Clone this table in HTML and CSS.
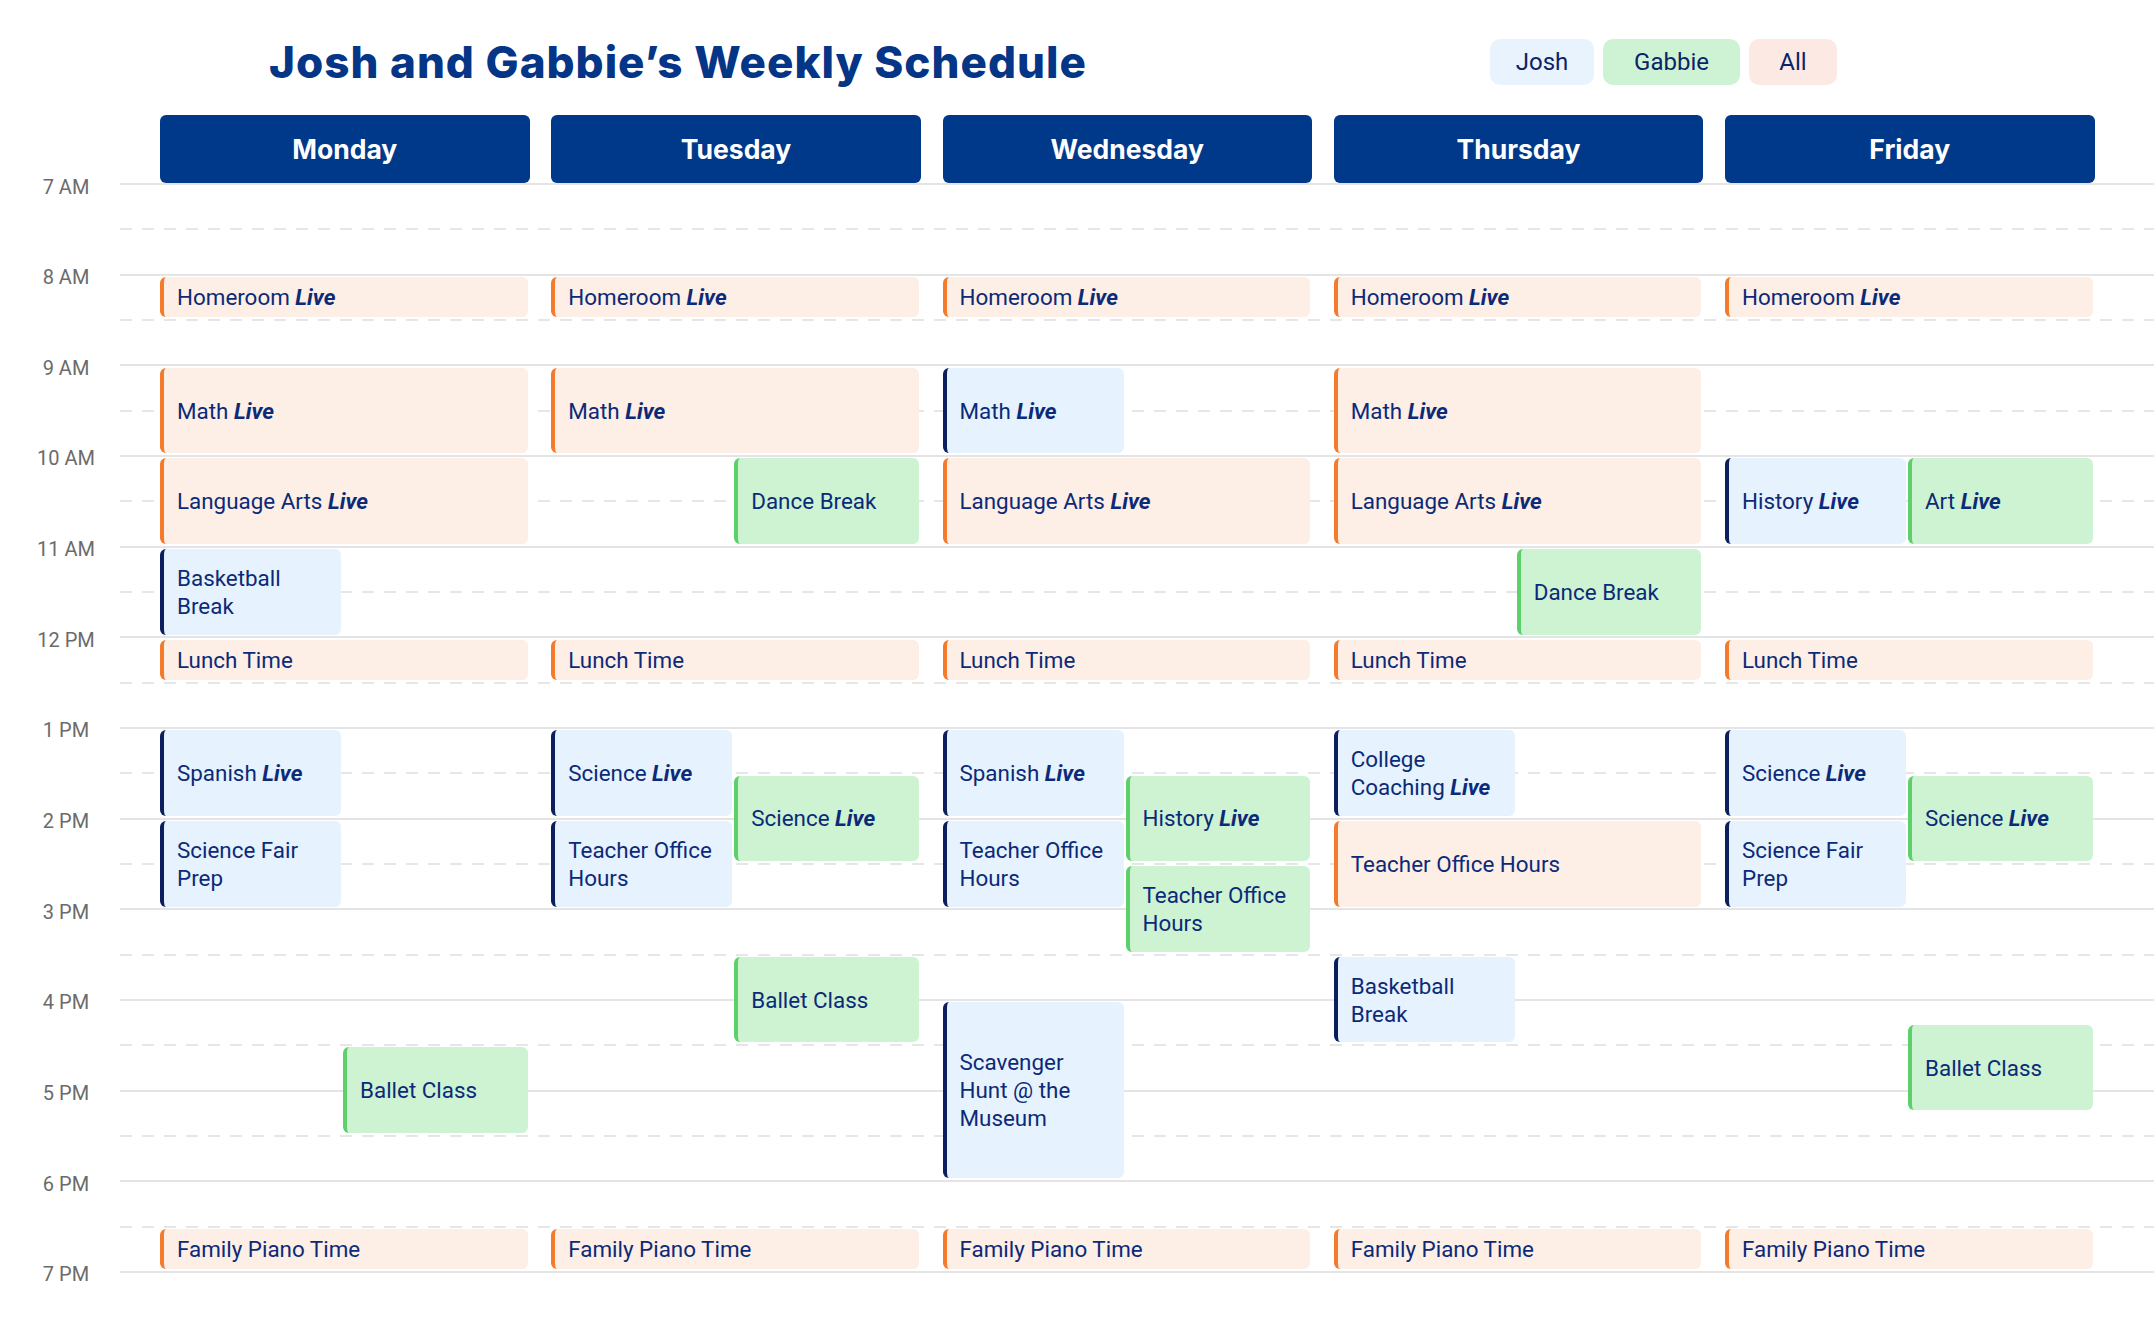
FILE: index.html
```html
<!DOCTYPE html>
<html lang="en">
<head>
<meta charset="utf-8">
<title>Josh and Gabbie’s Weekly Schedule</title>
<link rel="stylesheet" href="styles.css">
</head>
<body>
<div class="page">
  <header class="topbar">
    <h1 class="title">Josh and Gabbie’s Weekly Schedule</h1>
    <nav class="filters">
      <button class="pill pill-josh">Josh</button>
      <button class="pill pill-gabbie">Gabbie</button>
      <button class="pill pill-all">All</button>
    </nav>
  </header>

  <section class="schedule">
    <div class="day-heads">
      <div class="day-head">Monday</div>
      <div class="day-head">Tuesday</div>
      <div class="day-head">Wednesday</div>
      <div class="day-head">Thursday</div>
      <div class="day-head">Friday</div>
    </div>

    <div class="body">
      <div class="times">
        <span class="time">7 AM</span>
        <span class="time">8 AM</span>
        <span class="time">9 AM</span>
        <span class="time">10 AM</span>
        <span class="time">11 AM</span>
        <span class="time">12 PM</span>
        <span class="time">1 PM</span>
        <span class="time">2 PM</span>
        <span class="time">3 PM</span>
        <span class="time">4 PM</span>
        <span class="time">5 PM</span>
        <span class="time">6 PM</span>
        <span class="time">7 PM</span>
      </div>

      <div class="board">
        <div class="lines">
          <div class="ln"></div><div class="ln dash"></div>
          <div class="ln"></div><div class="ln dash"></div>
          <div class="ln"></div><div class="ln dash"></div>
          <div class="ln"></div><div class="ln dash"></div>
          <div class="ln"></div><div class="ln dash"></div>
          <div class="ln"></div><div class="ln dash"></div>
          <div class="ln"></div><div class="ln dash"></div>
          <div class="ln"></div><div class="ln dash"></div>
          <div class="ln"></div><div class="ln dash"></div>
          <div class="ln"></div><div class="ln dash"></div>
          <div class="ln"></div><div class="ln dash"></div>
          <div class="ln"></div><div class="ln dash"></div>
          <div class="ln-end"></div>
        </div>

        <div class="days">
          <!-- Monday -->
          <div class="day">
            <div class="ev all full" style="grid-row:5/7"><span>Homeroom <b>Live</b></span></div>
            <div class="ev all full" style="grid-row:9/13"><span>Math <b>Live</b></span></div>
            <div class="ev all full" style="grid-row:13/17"><span>Language Arts <b>Live</b></span></div>
            <div class="ev josh left" style="grid-row:17/21"><span>Basketball Break</span></div>
            <div class="ev all full" style="grid-row:21/23"><span>Lunch Time</span></div>
            <div class="ev josh left" style="grid-row:25/29"><span>Spanish <b>Live</b></span></div>
            <div class="ev josh left" style="grid-row:29/33"><span>Science Fair Prep</span></div>
            <div class="ev gabbie right" style="grid-row:39/43"><span>Ballet Class</span></div>
            <div class="ev all full" style="grid-row:47/49"><span>Family Piano Time</span></div>
          </div>
          <!-- Tuesday -->
          <div class="day">
            <div class="ev all full" style="grid-row:5/7"><span>Homeroom <b>Live</b></span></div>
            <div class="ev all full" style="grid-row:9/13"><span>Math <b>Live</b></span></div>
            <div class="ev gabbie right" style="grid-row:13/17"><span>Dance Break</span></div>
            <div class="ev all full" style="grid-row:21/23"><span>Lunch Time</span></div>
            <div class="ev josh left" style="grid-row:25/29"><span>Science <b>Live</b></span></div>
            <div class="ev gabbie right" style="grid-row:27/31"><span>Science <b>Live</b></span></div>
            <div class="ev josh left" style="grid-row:29/33"><span>Teacher Office Hours</span></div>
            <div class="ev gabbie right" style="grid-row:35/39"><span>Ballet Class</span></div>
            <div class="ev all full" style="grid-row:47/49"><span>Family Piano Time</span></div>
          </div>
          <!-- Wednesday -->
          <div class="day">
            <div class="ev all full" style="grid-row:5/7"><span>Homeroom <b>Live</b></span></div>
            <div class="ev josh left" style="grid-row:9/13"><span>Math <b>Live</b></span></div>
            <div class="ev all full" style="grid-row:13/17"><span>Language Arts <b>Live</b></span></div>
            <div class="ev all full" style="grid-row:21/23"><span>Lunch Time</span></div>
            <div class="ev josh left" style="grid-row:25/29"><span>Spanish <b>Live</b></span></div>
            <div class="ev gabbie right" style="grid-row:27/31"><span>History <b>Live</b></span></div>
            <div class="ev josh left" style="grid-row:29/33"><span>Teacher Office Hours</span></div>
            <div class="ev gabbie right" style="grid-row:31/35"><span>Teacher Office Hours</span></div>
            <div class="ev josh left" style="grid-row:37/45"><span>Scavenger Hunt @ the Museum</span></div>
            <div class="ev all full" style="grid-row:47/49"><span>Family Piano Time</span></div>
          </div>
          <!-- Thursday -->
          <div class="day">
            <div class="ev all full" style="grid-row:5/7"><span>Homeroom <b>Live</b></span></div>
            <div class="ev all full" style="grid-row:9/13"><span>Math <b>Live</b></span></div>
            <div class="ev all full" style="grid-row:13/17"><span>Language Arts <b>Live</b></span></div>
            <div class="ev gabbie right" style="grid-row:17/21"><span>Dance Break</span></div>
            <div class="ev all full" style="grid-row:21/23"><span>Lunch Time</span></div>
            <div class="ev josh left" style="grid-row:25/29"><span>College Coaching <b>Live</b></span></div>
            <div class="ev all full" style="grid-row:29/33"><span>Teacher Office Hours</span></div>
            <div class="ev josh left" style="grid-row:35/39"><span>Basketball Break</span></div>
            <div class="ev all full" style="grid-row:47/49"><span>Family Piano Time</span></div>
          </div>
          <!-- Friday -->
          <div class="day">
            <div class="ev all full" style="grid-row:5/7"><span>Homeroom <b>Live</b></span></div>
            <div class="ev josh left" style="grid-row:13/17"><span>History <b>Live</b></span></div>
            <div class="ev gabbie right" style="grid-row:13/17"><span>Art <b>Live</b></span></div>
            <div class="ev all full" style="grid-row:21/23"><span>Lunch Time</span></div>
            <div class="ev josh left" style="grid-row:25/29"><span>Science <b>Live</b></span></div>
            <div class="ev gabbie right" style="grid-row:27/31"><span>Science <b>Live</b></span></div>
            <div class="ev josh left" style="grid-row:29/33"><span>Science Fair Prep</span></div>
            <div class="ev gabbie right" style="grid-row:38/42"><span>Ballet Class</span></div>
            <div class="ev all full" style="grid-row:47/49"><span>Family Piano Time</span></div>
          </div>
        </div>
      </div>
    </div>
  </section>
</div>
</body>
</html>
```

FILE: styles.css
```css
* { box-sizing: border-box; }

html, body {
  margin: 0;
  background: #ffffff;
}

.page {
  width: 2154px;
  font-family: "Roboto", "Liberation Sans", sans-serif;
  color: #0b2a78;
}

/* ---------- top bar ---------- */
.topbar {
  height: 115px;
  padding: 39px 0 0 269px;
  display: grid;
  grid-template-columns: 1221px auto;
  align-content: start;
  align-items: center;
}

.title {
  margin: 0;
  font-family: "Inter", "Open Sans", sans-serif;
  font-weight: 800;
  font-size: 44px;
  letter-spacing: 1px;
  line-height: 46px;
  color: #053586;
  white-space: nowrap;
}

.filters {
  display: flex;
  gap: 9px;
}

.pill {
  height: 46px;
  padding: 0;
  border: 0;
  border-radius: 10px;
  font-family: "Roboto", "Liberation Sans", sans-serif;
  font-size: 24px;
  color: #0b2466;
  text-align: center;
  cursor: pointer;
}
.pill-josh { width: 104px; background: #e8f3fd; }
.pill-gabbie { width: 137px; background: #cef3d4; }
.pill-all { width: 88px; background: #fde9e3; }

/* ---------- day headers ---------- */
.day-heads {
  margin-left: 160px;
  display: grid;
  grid-template-columns: repeat(5, 369.5px);
  column-gap: 21.75px;
  height: 68px;
}

.day-head {
  background: #00398a;
  border-radius: 6px;
  color: #ffffff;
  font-family: "Inter", "Open Sans", sans-serif;
  font-weight: 700;
  font-size: 26.5px;
  display: flex;
  align-items: center;
  justify-content: center;
}

/* ---------- schedule body ---------- */
.body {
  display: grid;
  grid-template-columns: 120px 1fr;
}

.times {
  margin-top: -44.333px;
  padding-left: 12px;
  display: grid;
  grid-template-rows: repeat(13, 90.6667px);
}

.time {
  display: flex;
  align-items: center;
  justify-content: center;
  padding-top: 5px;
  font-size: 20px;
  color: #6b6b6b;
  white-space: nowrap;
}

.board {
  display: grid;
}

.lines,
.days {
  grid-area: 1 / 1;
}

.lines {
  display: grid;
  grid-template-rows: repeat(24, 45.3333px) 2px;
}

.ln {
  border-top: 2px solid #e4e4e4;
}

.ln.dash {
  border-top: 0;
  background-image: repeating-linear-gradient(90deg, #e6e6e6 0 12px, transparent 12px 22px);
  background-size: 100% 2px;
  background-repeat: no-repeat;
}

.ln-end {
  background: #e4e4e4;
}

.days {
  padding: 1px 0 0 40px;
  display: grid;
  grid-template-columns: repeat(5, 369.5px);
  column-gap: 21.75px;
  align-items: start;
}

.day {
  display: grid;
  grid-template-rows: repeat(48, 22.6667px);
  grid-template-columns: 183px 1fr;
}

/* ---------- events ---------- */
.ev {
  margin: 2.5px 2px 2.5px 0;
  min-height: 0;
  overflow: hidden;
  border-left: 4px solid;
  border-radius: 6px;
  padding: 0 12px 0 13px;
  display: flex;
  align-items: center;
  font-size: 22.4px;
  line-height: 28px;
  color: #0b2a78;
}

.ev b {
  font-weight: 700;
  font-style: italic;
}

.full { grid-column: 1 / 3; }
.left { grid-column: 1; }
.right { grid-column: 2; }

.all { background: #fdeee6; border-left-color: #f47b2c; }
.josh { background: #e6f2fd; border-left-color: #0b1f5f; }
.gabbie { background: #cdf3d3; border-left-color: #5dd06b; }
```
